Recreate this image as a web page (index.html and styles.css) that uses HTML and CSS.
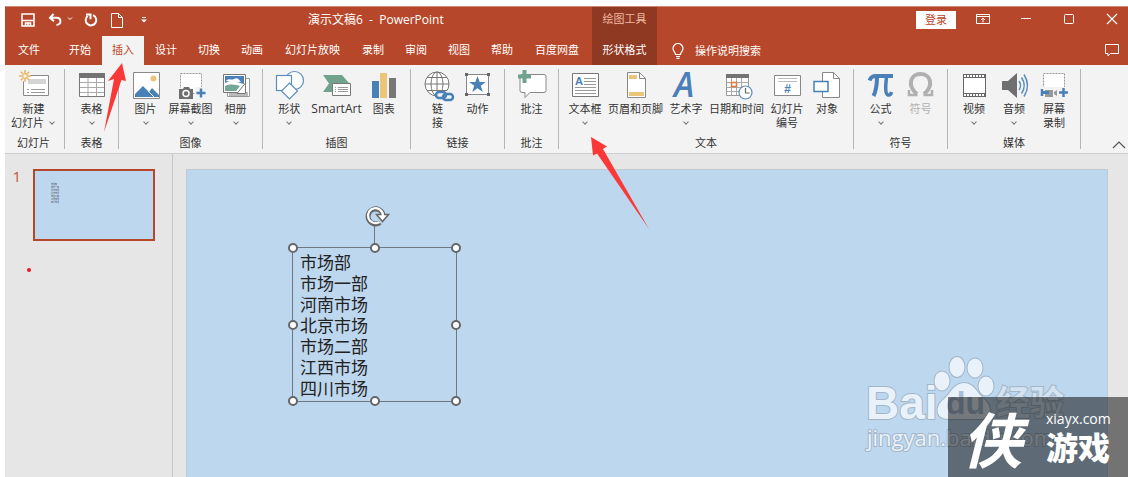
FILE: index.html
```html
<!DOCTYPE html>
<html lang="zh-CN">
<head>
<meta charset="utf-8">
<title>演示文稿6 - PowerPoint</title>
<link rel="stylesheet" href="styles.css">
</head>
<body>
<div class="window">
  <header class="header">
    <div class="title-row">
      <div class="quick">
        <button class="qa" aria-label="保存"><svg width="14" height="14" viewBox="0 0 14 14" fill="none" stroke="#fff" stroke-width="1.6"><path d="M1 1h12v12H1zM1 7.5h12M4.5 13v-3h5v3M7 10v3"/></svg></button>
        <button class="qa undo" aria-label="撤消"><svg width="26" height="14" viewBox="0 0 26 14" fill="none" stroke="#fff" stroke-width="2"><path d="M5.500 1 2 4.800l4 3.500M2 4.800h6.500c5 0 5.500 6.500 0 7.200"/><path d="m20 4.500 2 2 2-2" stroke-width="1"/></svg></button>
        <button class="qa" aria-label="重复"><svg width="14" height="14" viewBox="0 0 14 14" fill="none" stroke="#fff" stroke-width="2"><path d="M3.600 3A5.300 5.300 0 1 0 9 2.200M2 1.500h4.500v4.800"/></svg></button>
        <button class="qa" aria-label="新建"><svg width="12" height="15" viewBox="0 0 12 15" fill="none" stroke="#fff"><path d="M.5.5h7l4 4v10H.5zM7.500.5v4h4"/></svg></button>
        <button class="qa" aria-label="自定义快速访问工具栏"><svg width="6" height="6" viewBox="0 0 6 6" fill="#fff"><path d="M1 0h4v1H1zM0 2.500h6L3 5.500z"/></svg></button>
      </div>
      <h1 class="doc-title">演示文稿6&nbsp; -&nbsp; PowerPoint</h1>
    </div>
    <div class="context">
      <span class="context-name">绘图工具</span>
      <button class="tab">形状格式</button>
    </div>
    <div class="window-tools">
      <button class="login">登录</button>
      <button class="wbtn" aria-label="功能区显示选项"><svg width="14" height="12" viewBox="0 0 14 12" fill="none" stroke="#fff"><path d="M.5 1.500h13v9H.5zM.5 3.500h13M7 9.500V5M5 7l2-2 2 2"/></svg></button>
      <button class="wbtn" aria-label="最小化"><svg width="12" height="12" viewBox="0 0 12 12" stroke="#fff"><path d="M1 5.500h10"/></svg></button>
      <button class="wbtn" aria-label="最大化"><svg width="12" height="12" viewBox="0 0 12 12" fill="none" stroke="#fff"><rect x="1.500" y="1.500" width="9" height="9" rx="1"/></svg></button>
      <button class="wbtn" aria-label="关闭"><svg width="12" height="12" viewBox="0 0 12 12" stroke="#fff" stroke-width="1.200"><path d="m1 1 10 10M11 1 1 11"/></svg></button>
    </div>
    <nav class="tabs">
      <button class="tab file">文件</button>
      <button class="tab">开始</button>
      <button class="tab active">插入</button>
      <button class="tab">设计</button>
      <button class="tab">切换</button>
      <button class="tab">动画</button>
      <button class="tab wide">幻灯片放映</button>
      <button class="tab">录制</button>
      <button class="tab">审阅</button>
      <button class="tab">视图</button>
      <button class="tab">帮助</button>
      <button class="tab wide">百度网盘</button>
    </nav>
    <div class="tell-row">
      <button class="tell"><svg width="12" height="16" viewBox="0 0 12 16" fill="none" stroke="#fff" stroke-width="1.200"><path d="M3.500 11.500C3.500 9 1 8.500 1 5.500a5 5 0 0 1 10 0c0 3-2.500 3.500-2.500 6zM4 13.500h4M4.500 15.300h3"/></svg>操作说明搜索</button>
      <button class="wbtn" aria-label="批注"><svg width="14" height="13" viewBox="0 0 14 13" fill="none" stroke="#fff"><path d="M.5.5h13v9H5.500L3 12V9.500H.5z"/></svg></button>
    </div>
  </header>

  <section class="ribbon" aria-label="插入">
    <div class="group g-slides">
      <div class="items">
        <button class="cmd"><svg class="ico" viewBox="0 0 32 32" fill="none"><path d="M5.500 6.500h25v20h-25z" fill="#fff" stroke="#8a8a8a"/><path d="M10 10h18v5H10z" fill="#d4d4d4"/><path d="M9 20.500h2m2 0h14M9 23.500h2m2 0h14" stroke="#999"/><circle cx="7" cy="7" r="5.500" fill="#f3f3f3"/><path d="M7 1v3M7 10v3M1 7h3M10 7h3M2.800 2.800l2 2M9.200 9.200l2 2M2.800 11.200l2-2M9.200 4.800l2-2" stroke="#e8b562" stroke-width="1.500"/><circle cx="7" cy="7" r="2.300" stroke="#e8b562" stroke-width="1.200"/></svg><span>新建<br>幻灯片<i class="chev inline"></i></span></button>
      </div>
      <h2>幻灯片</h2>
    </div>
    <div class="group g-table">
      <div class="items">
        <button class="cmd"><svg class="ico" viewBox="0 0 32 32" fill="none"><path d="M3.500 4.500h25v23h-25z" fill="#fff" stroke="#777"/><path d="M3 4h26v5H3z" fill="#737373"/><path d="M4 13.500h24M4 18.500h24M4 23.500h24M12 9v18M20.500 9v18" stroke="#aaa"/></svg><span>表格</span><i class="chev"></i></button>
      </div>
      <h2>表格</h2>
    </div>
    <div class="group g-images">
      <div class="items">
        <button class="cmd"><svg class="ico" viewBox="0 0 32 32" fill="none"><path d="M3.500 3.500h26v26h-26z" fill="#fff" stroke="#8a8a8a"/><circle cx="23.500" cy="9.500" r="3" fill="#edc578"/><path d="M5 28v-3l8-8 6 6 3-4 7 7v2z" fill="#4a80b8"/><path d="m18 22 6 6" stroke="#fff"/></svg><span>图片</span><i class="chev"></i></button>
        <button class="cmd"><svg class="ico" viewBox="0 0 32 32" fill="none"><path d="M5.500 4.500h21v20h-21z" fill="#fff" stroke="#999" stroke-dasharray="2 1"/><path d="M3 19h15v11H3z" fill="#f3f3f3"/><path d="M4 20h4l1-2h5l1 2h3v10H4z" fill="#6f6f6f"/><circle cx="11" cy="24.500" r="3" stroke="#fff" stroke-width="1.500"/><path d="M20 18h11v12H20z" fill="#f3f3f3"/><path d="M26 19.500v9M21.500 24h9" stroke="#4a80b8" stroke-width="2.500"/></svg><span>屏幕截图</span><i class="chev"></i></button>
        <button class="cmd"><svg class="ico" viewBox="0 0 32 32" fill="none"><path d="M7.500 9.500h22v18h-22z" fill="#fff" stroke="#999"/><path d="M9 23h19v4H9z" fill="#bbb"/><path d="M3.500 5.500h22v18h-22z" fill="#fff" stroke="#777"/><path d="M5 7h19v8l-8-2-6-1-5 2z" fill="#4a80b8"/><path d="M6 12c3-4 5 0 8-2 4-2 5 1 7 3-3 1-9 0-15-1z" fill="#fff"/><path d="M5 22v-5c6-3 12-1 15 0l-4 5z" fill="#74a795"/><path d="M17 24.500h8.500V14z" fill="#fff" stroke="#777"/></svg><span>相册</span><i class="chev"></i></button>
      </div>
      <h2>图像</h2>
    </div>
    <div class="group g-illus">
      <div class="items">
        <button class="cmd"><svg class="ico" viewBox="0 0 32 32" fill="#fff" stroke="#5c8cc0" stroke-width="1.200"><circle cx="21.500" cy="11.500" r="9"/><rect x="3.500" y="6.500" width="15" height="15"/><path d="m16.500 14 8 8-8 8-8-8z"/></svg><span>形状</span><i class="chev"></i></button>
        <button class="cmd"><svg class="ico" viewBox="0 0 32 32" fill="none"><path d="M2 6h19l7 8-8 9H2l6-8.500z" fill="#70a38e"/><path d="M11.500 14.500h18v12h-18z" fill="#fff" stroke="#777"/><path d="M14 18.500h1m2 0h10M14 20.500h1m2 0h10M14 22.500h1m2 0h10" stroke="#999"/></svg><span class="latin">SmartArt</span></button>
        <button class="cmd"><svg class="ico" viewBox="0 0 32 32"><path d="M4 12h7v17H4z" fill="#4a80b8"/><path d="M12 4h7v25h-7z" fill="#edc578"/><path d="M21 9h7v20h-7z" fill="#777"/></svg><span>图表</span></button>
      </div>
      <h2>插图</h2>
    </div>
    <div class="group g-links">
      <div class="items">
        <button class="cmd"><svg class="ico" viewBox="0 0 32 32" fill="none"><circle cx="15" cy="15" r="12" fill="#fff"/><g stroke="#777"><circle cx="15" cy="15" r="12"/><ellipse cx="15" cy="15" rx="6" ry="12"/><path d="M15 3v24M3 15h24M5 8.500h20M5 21.500h20"/></g><path d="M14 22h18v9H14z" fill="#f3f3f3"/><g stroke="#4a80b8" stroke-width="2.500"><rect x="14" y="23" width="10" height="6" rx="3"/><rect x="21" y="25" width="10" height="6" rx="3"/></g></svg><span>链<br>接</span></button>
        <button class="cmd"><svg class="ico" viewBox="0 0 32 32"><path d="M4.500 5.500h22v20h-22z" fill="#fff" stroke="#888"/><path d="M3 4h3v3H3zM25 4h3v3h-3zM3 24h3v3H3zM25 24h3v3h-3z" fill="#666"/><path d="m15.500 7 2.200 6h6.100l-5 3.700 2 6.300-5.300-3.800-5.300 3.800 2-6.300-5-3.700h6.100z" fill="#4a80b8"/></svg><span>动作</span></button>
      </div>
      <h2>链接</h2>
    </div>
    <div class="group g-comment">
      <div class="items">
        <button class="cmd"><svg class="ico" viewBox="0 0 32 32"><path d="M6 5.500h22a2 2 0 0 1 2 2v14a2 2 0 0 1-2 2H14l-5 5v-5H6a2 2 0 0 1-2-2v-14a2 2 0 0 1 2-2z" fill="#fff" stroke="#888"/><path d="M6.500 1h4v4.500H15v4h-4.500V14h-4V9.500H2v-4h4.500z" fill="#70a38e"/></svg><span>批注</span></button>
      </div>
      <h2>批注</h2>
    </div>
    <div class="group g-text">
      <div class="items">
        <button class="cmd"><svg class="ico" viewBox="0 0 32 32"><path d="M3.500 4.500h26v23h-26z" fill="#fff" stroke="#777"/><path d="M15 9.500h12M15 12.500h12M15 15.500h12M6 18.500h21M6 21.500h21M6 24.500h21" stroke="#999"/><text x="6" y="16" class="t-a">A</text></svg><span>文本框</span><i class="chev"></i></button>
        <button class="cmd"><svg class="ico" viewBox="0 0 32 32"><path d="M7.500 3.500h12l6 6v19h-18z" fill="#fff" stroke="#888"/><path d="M19.500 3.500v6h6" fill="none" stroke="#888"/><path d="M9 6h8v4H9zM9 23h15v4H9z" fill="#edc578"/></svg><span>页眉和页脚</span></button>
        <button class="cmd"><svg class="ico" viewBox="0 0 32 32"><text x="4" y="28" class="t-art">A</text></svg><span>艺术字</span><i class="chev"></i></button>
        <button class="cmd"><svg class="ico" viewBox="0 0 32 32" fill="none"><path d="M5.500 5.500h22v21h-22z" fill="#fff" stroke="#999"/><path d="M10.500 9v17M15.500 9v17M20.500 9v17M6 13.500h21M6 18.500h21M6 22.500h21" stroke="#aaa"/><path d="M5 5h23v4H5z" fill="#737373"/><path d="M10.500 13.500h5v4h-5z" stroke="#e27a3f" stroke-width="1.500"/><circle cx="24.500" cy="23.500" r="6.500" fill="#fff" stroke="#5c8cc0" stroke-width="1.200"/><path d="M24.500 19v5h4" stroke="#666" stroke-width="1.200"/></svg><span>日期和时间</span></button>
        <button class="cmd"><svg class="ico" viewBox="0 0 32 32"><path d="M3.500 6.500h26v20h-26z" fill="#fff" stroke="#888"/><path d="M7 9.500h19M7 12.500h19" stroke="#bbb"/><text x="13" y="24" class="t-num">#</text></svg><span>幻灯片<br>编号</span></button>
        <button class="cmd"><svg class="ico" viewBox="0 0 32 32"><path d="M11.500 3.500h11l6 6v19h-17z" fill="#fff" stroke="#888"/><path d="M22.500 3.500v6h6" fill="none" stroke="#888"/><path d="M3 12.500h14v10H3z" fill="#fff" stroke="#4a80b8" stroke-width="1.500"/></svg><span>对象</span></button>
      </div>
      <h2>文本</h2>
    </div>
    <div class="group g-symbols">
      <div class="items">
        <button class="cmd"><svg class="ico" viewBox="0 0 32 32" fill="none" stroke="#4a80b8"><path d="M4.500 11.500C6 7.500 8 7 11 7h17" stroke-width="4"/><path d="M12 8c0 8-1 14-3.500 19" stroke-width="4"/><path d="M21.500 8c-1 9-1.500 17 1.500 18 2 .5 3-.8 3.500-3" stroke-width="3.500"/></svg><span>公式</span><i class="chev"></i></button>
        <button class="cmd" disabled><svg class="ico" viewBox="0 0 32 32" fill="none" stroke="#b0b0b0"><path d="M12 25C2 17 5 5 15.500 5S29 17 19 25" stroke-width="4"/><path d="M4 21v5h8.500M27 21v5h-8.500" stroke-width="2.500"/></svg><span>符号</span></button>
      </div>
      <h2>符号</h2>
    </div>
    <div class="group g-media">
      <div class="items">
        <button class="cmd"><svg class="ico" viewBox="0 0 32 32" fill="none"><path d="M5 5h23v23H5z" fill="#666"/><path d="M6 9h21v15H6z" fill="#fff"/><path d="M6 7h21M6 26h21" stroke="#fff" stroke-width="2" stroke-dasharray="2 1"/></svg><span>视频</span><i class="chev"></i></button>
        <button class="cmd"><svg class="ico" viewBox="0 0 32 32" fill="none"><path d="M4 12h6l9-8v25l-9-8H4z" fill="#6f6f6f"/><path d="M21 12q3 4.500 0 9M23.500 8.500q5.500 8 0 16M26 5.500q7 11 0 22" stroke="#5c8cc0" stroke-width="1.500"/></svg><span>音频</span><i class="chev"></i></button>
        <button class="cmd"><svg class="ico" viewBox="0 0 32 32" fill="none"><path d="M5.500 4.500h21v18h-21z" fill="#fff" stroke="#999" stroke-dasharray="2 1"/><path d="M3 18h28v11H3z" fill="#f3f3f3"/><path d="M4 20v7M4 23.500h9" stroke="#4a80b8" stroke-width="2.500"/><path d="M7 21h8v7H7zM16 23l3-2v6l-3-2z" fill="#999"/><path d="M5 22h6v3H5z" fill="#4a80b8"/><path d="M25.500 19v9M21 23.500h9" stroke="#4a80b8" stroke-width="2.500"/></svg><span>屏幕<br>录制</span></button>
      </div>
      <h2>媒体</h2>
    </div>
    <button class="collapse" aria-label="折叠功能区"><svg width="14" height="8" viewBox="0 0 14 8" fill="none" stroke="#555" stroke-width="1.200"><path d="m1 7 6-6 6 6"/></svg></button>
  </section>

  <main class="work">
    <aside class="pane">
      <span class="num">1</span>
      <button class="thumb" aria-label="幻灯片 1"><span class="mini">市场部<br>市场一部<br>河南市场<br>北京市场<br>市场二部<br>江西市场<br>四川市场</span></button>
      <i class="dot"></i>
    </aside>
    <div class="stage">
      <div class="slide">
        <div class="textbox">
          <p>市场部</p><p>市场一部</p><p>河南市场</p><p>北京市场</p><p>市场二部</p><p>江西市场</p><p>四川市场</p>
          <i class="stem"></i>
          <svg class="rotate" viewBox="0 0 26 22" fill="none"><path d="M16 17.500A7.500 7.500 0 1 1 19 10" stroke="#666" stroke-width="5"/><path d="M12.500 9.500h12l-6 7z" fill="#fff" stroke="#666" stroke-width="1.500"/><path d="M15.500 17A7.500 7.500 0 1 1 19 11" stroke="#fff" stroke-width="2.200"/></svg>
          <i class="h tl"></i><i class="h tc"></i><i class="h tr"></i><i class="h ml"></i><i class="h mr"></i><i class="h bl"></i><i class="h bc"></i><i class="h br"></i>
        </div>
      </div>
    </div>
  </main>
</div>

<svg class="arrow arrow-tab" viewBox="0 0 24 70"><path d="M19 0 23 18 18.500 17 1 69 11 16 5 18z" fill="#fb3838"/></svg>
<svg class="arrow arrow-box" viewBox="0 0 58 92"><path d="M0 0 16 9.500 12 12 58 92 6 16.500 2 18.500z" fill="#fb3838"/></svg>

<div class="wm" aria-hidden="true">
  <svg class="wm-art" viewBox="0 0 210 105">
    <g class="wm-paint">
      <text x="1" y="67" class="wm-bai">Bai</text>
      <ellipse cx="77" cy="29" rx="7.500" ry="9.500"/>
      <ellipse cx="92" cy="15" rx="7.500" ry="10"/>
      <ellipse cx="110" cy="16" rx="7.500" ry="9.500"/>
      <ellipse cx="121" cy="34" rx="7.500" ry="9.500"/>
      <path d="M99 31c10 0 13 10 20 16 9 8 7 20-3 20H83c-12 0-14-12-4-20 7-6 10-16 20-16z"/>
      <text x="131" y="63" class="wm-cn">经验</text>
      <text x="2" y="94" class="wm-url">jingyan.baidu.com</text>
    </g>
    <text x="81" y="62" class="wm-du">du</text>
  </svg>
</div>
<div class="badge">
  <span class="badge-mark">侠</span>
  <span class="badge-text"><small>xiayx.com</small><b>游戏</b></span>
</div>
</body>
</html>
```
FILE: styles.css
```css
* { box-sizing: border-box; }

body {
  position: relative;
  display: flex;
  min-height: 100vh;
  margin: 0;
  overflow: hidden;
  background: #fff;
  color: #333;
  font: 11px/14px "Open Sans", "Noto Sans CJK SC", sans-serif;
}

button {
  margin: 0;
  padding: 0;
  border: 0;
  background: none;
  color: inherit;
  font: inherit;
}

svg { display: block; }
h1, h2, p { margin: 0; font: inherit; }

.window {
  display: flex;
  flex: 1;
  flex-direction: column;
  margin: 6px 0 0 5px;
}

/* Title bar and tabs */
.header {
  display: grid;
  grid-template: 29px 29px / 587px 65px 1fr;
  border-top: 1px solid #d08672;
  background: #b7472a;
  color: #fff;
}

.title-row { display: flex; align-items: center; padding-bottom: 3px; }
.quick { display: flex; align-items: center; gap: 13px; width: 303px; padding-left: 16px; }
.quick .undo { margin-right: -3px; }
.quick .qa:last-child { margin-left: 5px; }
.doc-title { font-size: 12px; }

.context {
  display: flex;
  grid-column: 2;
  grid-row: 1 / 3;
  flex-direction: column;
  align-items: center;
  background: #8f3822;
}
.context-name { height: 29px; padding-top: 5px; color: #efb9a5; }

.window-tools { display: flex; align-items: center; justify-content: flex-end; gap: 11px; padding-bottom: 6px; }
.wbtn { display: flex; justify-content: center; width: 32px; }
.login { width: 40px; height: 18px; margin-top: 3px; background: #fff; color: #b7472a; }

.tabs { display: flex; gap: 1px; }
.tab { height: 29px; padding: 0 10px 2px; }
.context .tab { padding: 0 0 2px; }
.tab.wide { padding: 0 11px 2px; }
.tab.file { padding: 0 13px 2px; margin-right: 5px; }
.tab.active { background: #f3f3f3; color: #b7472a; }

.tell-row { display: flex; grid-column: 3; align-items: center; justify-content: space-between; padding-left: 15px; }
.tell { display: flex; align-items: center; gap: 11px; }

/* Ribbon */
.ribbon {
  display: flex;
  padding: 4px 0;
  border-bottom: 1px solid #cfcfcf;
  background: #f3f3f3;
}
.group {
  display: flex;
  flex-direction: column;
  align-items: center;
  justify-content: space-between;
  height: 80px;
  border-right: 1px solid #b5b5b5;
}
.g-slides { width: 60px; padding-right: 2px; }
.g-table { width: 54px; }
.g-images { width: 144px; }
.g-illus { width: 148px; }
.g-links { width: 94px; }
.g-comment { width: 54px; }
.g-text { width: 295px; }
.g-symbols { width: 94px; }
.g-media { width: 133px; }
.group h2 { line-height: 12px; }

.items { display: flex; gap: 6px; }
.cmd { display: flex; flex-direction: column; align-items: center; min-width: 34px; white-space: nowrap; }
.cmd .latin { font-size: 12px; }
.cmd:disabled { color: #b0b0b0; }
.g-illus .items { gap: 5px; }
.ico { width: 32px; height: 32px; margin-bottom: 1px; overflow: visible; }

.chev { width: 4px; height: 4px; margin-top: 4px; border: solid #777; border-width: 0 1px 1px 0; transform: rotate(45deg); }
.chev.inline { display: inline-block; margin: 0 2px 3px 6px; }

.t-a { fill: #4a80b8; font: bold 11px "Liberation Sans", sans-serif; }
.t-art { fill: #4a80b8; font: italic 600 34px "Open Sans", sans-serif; }
.t-num { fill: #4a80b8; font: italic bold 12px "Liberation Sans", sans-serif; }

.collapse { align-self: flex-end; margin: 0 2px 0 auto; }

/* Work area */
.work { display: flex; flex: 1; background: #e6e6e6; }
.pane {
  display: grid;
  grid-template: 72px 1fr / 20px 122px;
  gap: 0 8px;
  width: 168px;
  padding-top: 15px;
  border-right: 1px solid #c6c6c6;
}
.num { color: #c0563c; font: 15px/14px "Open Sans", sans-serif; text-align: right; padding-right: 4px; }
.thumb { padding: 12px 16px; border: 2px solid #b7472a; background: #bdd7ee; text-align: left; }
.mini { display: block; height: 100%; color: #445; font-size: 2px; line-height: 3px; }
.dot { width: 4px; height: 4px; margin: 27px 0 0 22px; border-radius: 50%; background: #e81c1c; }

.stage { display: flex; flex: 1; padding: 15px 20px 0 13px; }
.slide { position: relative; flex: 1; border: 1px solid #c3c9d0; border-bottom: 0; background: #bdd7ee; }

.textbox {
  position: absolute;
  top: 77px;
  left: 105px;
  width: 165px;
  padding: 3px 7px;
  border: 1px solid #6e7780;
  color: #222;
  font: 17px/21px "Noto Sans CJK SC", sans-serif;
}
.stem { position: absolute; top: -24px; left: 81px; width: 1px; height: 24px; background: #6e7780; }
.rotate { position: absolute; top: -43px; left: 71px; width: 26px; height: 22px; }
.h {
  position: absolute;
  width: 10px;
  height: 10px;
  margin: -5px;
  border: 2px solid #666;
  border-radius: 50%;
  background: #fff;
}
.tl, .ml, .bl { left: 0; }
.tc, .bc { left: 50%; }
.tr, .mr, .br { left: 100%; }
.tl, .tc, .tr { top: 0; }
.ml, .mr { top: 50%; }
.bl, .bc, .br { top: 100%; }

/* Pointers and marks lying over the window */
.arrow { position: absolute; }
.arrow-tab { top: 63px; left: 103px; width: 24px; height: 70px; }
.arrow-box { top: 137px; left: 591px; width: 58px; height: 92px; }

.wm { position: absolute; right: 53px; bottom: 20px; }
.wm-art { width: 210px; height: 105px; overflow: visible; }
.wm-paint { fill: #e9f2fa; stroke: #a3b6c8; stroke-width: 2px; paint-order: stroke; }
.wm-bai { font: bold 46px "Liberation Sans", sans-serif; }
.wm-du { fill: #a9bfd3; font: bold 32px "Liberation Sans", sans-serif; }
.wm-cn { fill: #d3e3f1; font: bold 34px "Noto Sans CJK SC", sans-serif; }
.wm-url { font: 22px "Open Sans", sans-serif; }

.badge {
  position: absolute;
  right: 0;
  bottom: 0;
  display: flex;
  align-items: center;
  width: 180px;
  height: 80px;
  padding-left: 14px;
  background: rgba(0, 0, 0, .5);
  color: #fff;
}
.badge-mark { flex: 0 0 84px; font: italic bold 60px/76px "Noto Sans CJK SC", sans-serif; }
.badge-text { display: flex; flex-direction: column; }
.badge-text small { font: 14px/18px "Open Sans", sans-serif; }
.badge-text b { font: 900 32px/36px "Noto Sans CJK SC", sans-serif; }
```
